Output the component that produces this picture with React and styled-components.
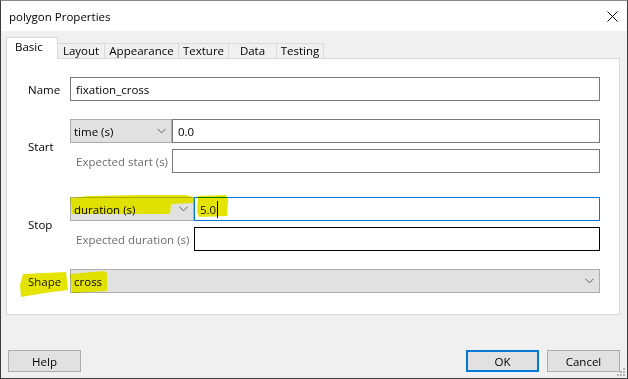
import React from "react"
import styled, { createGlobalStyle } from "styled-components"

const GlobalStyle = createGlobalStyle`
  html, body {
    margin: 0;
    padding: 0;
    background: #fff;
  }
  body {
    font-family: "Open Sans", "Noto Sans", sans-serif;
    font-size: 11.5px;
    color: #000;
  }
`

const Window = styled.div`
  position: relative;
  box-sizing: border-box;
  width: 628px;
  height: 379px;
  border: 1px solid #3c3c3c;
  border-top-color: #8a8a8a;
  background: #f0f0f0;
  display: flex;
  flex-direction: column;
  white-space: nowrap;
`

const TitleBar = styled.div`
  height: 30px;
  flex: none;
  background: #fff;
  display: flex;
  align-items: center;
  justify-content: space-between;
  padding: 0 9px 0 8px;
  font-size: 11.5px;
`

const TabBar = styled.div`
  display: flex;
  align-items: flex-end;
  height: 21px;
  margin-top: 6px;
  padding-left: 5px;
  position: relative;
  z-index: 2;
`

const Tab = styled.div`
  box-sizing: border-box;
  width: ${p => p.$w}px;
  height: ${p => (p.$active ? 22 : 15)}px;
  margin-bottom: ${p => (p.$active ? -1 : 0)}px;
  margin-left: ${p => (p.$first ? 0 : -1)}px;
  border: 1px solid #d9d9d9;
  border-bottom: none;
  background: ${p => (p.$active ? "#fff" : "#f0f0f0")};
  position: relative;
  z-index: ${p => (p.$active ? 2 : 1)};
  display: flex;
  align-items: center;
  justify-content: ${p => (p.$active ? "flex-start" : "center")};
  padding-left: ${p => (p.$active ? 8 : 0)}px;
  padding-bottom: ${p => (p.$active ? 3 : 0)}px;
  font-size: 11.5px;
  line-height: 1;
`

const Panel = styled.div`
  box-sizing: border-box;
  height: 257px;
  margin: 0 7px 0 5px;
  border: 1px solid #d9d9d9;
  background: #fff;
  padding: 18px 19px 0 21px;
  display: flex;
  flex-direction: column;
`

const Row = styled.div`
  display: grid;
  grid-template-columns: 42px 1fr;
  align-items: center;
  margin-top: ${p => p.$gap || 0}px;
`

const Label = styled.span`
  font-size: 11.5px;
`

const Group = styled.div`
  display: grid;
  grid-template-columns: ${p => p.$lead}px 1fr;
  row-gap: 6px;
  align-items: center;
`

const Select = styled.div`
  box-sizing: border-box;
  height: 24px;
  background: #e1e1e1;
  border: 1px solid #adadad;
  display: flex;
  align-items: center;
  justify-content: space-between;
  padding: 0 5px 0 3px;
  font-size: 11.5px;
`

const Field = styled.div`
  box-sizing: border-box;
  height: 24px;
  background: #fff;
  border: 1px solid ${p => p.$border || "#7a7a7a"};
  display: flex;
  align-items: center;
  padding: 0 5px;
  font-size: 11.5px;
`

const SubLabel = styled.span`
  color: #6d6d6d;
  padding-left: 6px;
  font-size: 11.5px;
`

const Caret = styled.span`
  display: inline-block;
  width: 1px;
  height: 17px;
  background: #000;
  margin-left: 1px;
`

const Footer = styled.div`
  margin-top: auto;
  display: flex;
  align-items: center;
  gap: 8px;
  padding: 0 7px 6px 7px;
`

const Spacer = styled.div`
  flex: 1;
`

const Button = styled.button`
  box-sizing: border-box;
  width: 73px;
  height: 22px;
  margin: 0;
  padding: 0;
  background: #e1e1e1;
  border: ${p => (p.$default ? "2px solid #0078d7" : "1px solid #adadad")};
  font-family: inherit;
  font-size: 11.5px;
  color: #000;
`

const Grip = styled.svg`
  position: absolute;
  right: 1px;
  bottom: 1px;
`

const Marker = styled.svg`
  position: absolute;
  top: -1px;
  left: -1px;
  pointer-events: none;
  mix-blend-mode: darken;
`

const Chevron = () => (
  <svg width="9" height="6" viewBox="0 0 9 6">
    <path d="M0.5 0.8 L4.5 4.8 L8.5 0.8" fill="none" stroke="#606060" strokeWidth="1" />
  </svg>
)

const tabs = [
  { name: "Basic", w: 52 },
  { name: "Layout", w: 48 },
  { name: "Appearance", w: 75 },
  { name: "Texture", w: 51 },
  { name: "Data", w: 49 },
  { name: "Testing", w: 48 },
]

const App = () => {
  return (
    <>
      <GlobalStyle />
      <Window>
        <TitleBar>
          <span>polygon Properties</span>
          <svg width="11" height="11" viewBox="0 0 11 11">
            <path d="M0.5 0.5 L10.5 10.5 M10.5 0.5 L0.5 10.5" stroke="#000" strokeWidth="1" />
          </svg>
        </TitleBar>
        <TabBar>
          {tabs.map((t, i) => (
            <Tab key={t.name} $w={t.w} $first={i === 0} $active={i === 0}>
              {t.name}
            </Tab>
          ))}
        </TabBar>
        <Panel>
          <Row>
            <Label>Name</Label>
            <Field>fixation_cross</Field>
          </Row>
          <Row $gap={18}>
            <Label>Start</Label>
            <Group $lead={102}>
              <Select>
                <span>time (s)</span>
                <Chevron />
              </Select>
              <Field>0.0</Field>
              <SubLabel>Expected start (s)</SubLabel>
              <Field />
            </Group>
          </Row>
          <Row $gap={24}>
            <Label>Stop</Label>
            <Group $lead={124}>
              <Select>
                <span>duration (s)</span>
                <Chevron />
              </Select>
              <Field $border="#0078d7">
                5.0
                <Caret />
              </Field>
              <SubLabel>Expected duration (s)</SubLabel>
              <Field $border="#000" />
            </Group>
          </Row>
          <Row $gap={18}>
            <Label>Shape</Label>
            <Select>
              <span>cross</span>
              <Chevron />
            </Select>
          </Row>
        </Panel>
        <Footer>
          <Button>Help</Button>
          <Spacer />
          <Button $default>OK</Button>
          <Button>Cancel</Button>
        </Footer>
        <Grip width="10" height="10" viewBox="0 0 10 10">
          <g fill="#b5b5b5">
            <rect x="7" y="7" width="2" height="2" />
            <rect x="4" y="7" width="2" height="2" />
            <rect x="1" y="7" width="2" height="2" />
            <rect x="7" y="4" width="2" height="2" />
            <rect x="4" y="4" width="2" height="2" />
            <rect x="7" y="1" width="2" height="2" />
          </g>
        </Grip>
        <Marker width="628" height="379" viewBox="0 0 628 379">
          <g fill="#e4e400">
            <path d="M70 198 L88 196 L140 195 L186 195 L193 197 L193 203 L171 204 L170 214 L72 214 Z" />
            <path d="M198 196 L226 195 L228 200 L227 216 L199 217 L197 212 Z" />
            <path d="M23 274 L66 272 L68 290 L45 293 L21 297 L20 285 Z" />
            <path d="M70 274 L104 271 L107 273 L107 291 L72 293 Z" />
          </g>
        </Marker>
      </Window>
    </>
  )
}

export default App
